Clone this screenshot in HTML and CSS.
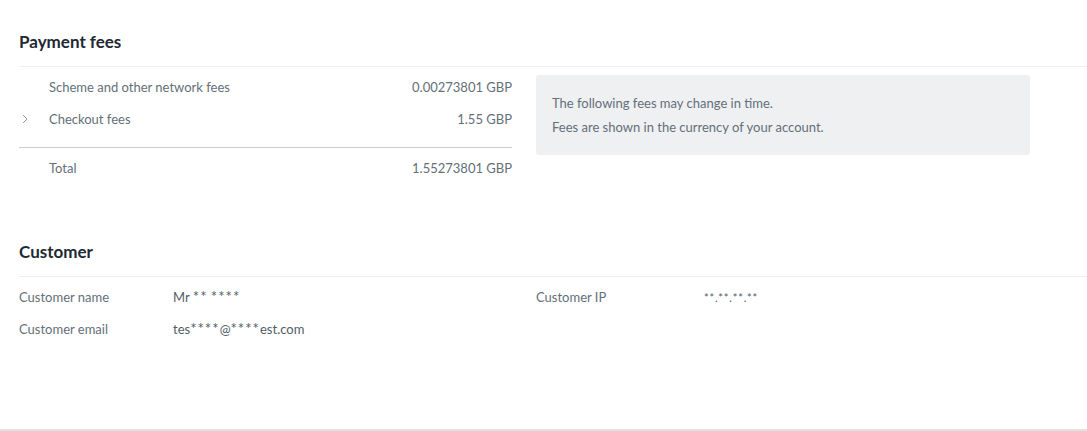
FILE: index.html
```html
<!DOCTYPE html>
<html lang="en">
<head>
<meta charset="utf-8">
<title>Payment details</title>
<link rel="stylesheet" href="styles.css">
</head>
<body>
<div class="page">
  <section class="section fees">
    <h2 class="section-title">Payment fees</h2>
    <div class="fees-body">
      <div class="fee-table">
        <div class="fee-row">
          <span class="fee-toggle"></span>
          <span class="fee-label">Scheme and other network fees</span>
          <span class="fee-amount">0.00273801 GBP</span>
        </div>
        <div class="fee-row">
          <span class="fee-toggle">
            <svg width="8" height="10" viewBox="0 0 8 10"><polyline points="2,1 6,5 2,9" fill="none" stroke="#9aa3aa" stroke-width="1"/></svg>
          </span>
          <span class="fee-label">Checkout fees</span>
          <span class="fee-amount">1.55 GBP</span>
        </div>
        <div class="fee-row total">
          <span class="fee-toggle"></span>
          <span class="fee-label">Total</span>
          <span class="fee-amount">1.55273801 GBP</span>
        </div>
      </div>
      <div class="fee-note">
        <p>The following fees may change in time.</p>
        <p>Fees are shown in the currency of your account.</p>
      </div>
    </div>
  </section>

  <section class="section customer">
    <h2 class="section-title">Customer</h2>
    <div class="customer-body">
      <div class="info-col left">
        <span class="info-label">Customer name</span><span class="info-value">Mr <span class="mask">**</span> <span class="mask">****</span></span>
        <span class="info-label">Customer email</span><span class="info-value">tes<span class="mask">****</span>@<span class="mask">****</span>est.com</span>
      </div>
      <div class="info-col right">
        <span class="info-label">Customer IP</span><span class="info-value ip">**.**.**.**</span>
      </div>
    </div>
  </section>
</div>
</body>
</html>
```
FILE: styles.css
```css
* { box-sizing: border-box; }
html, body { margin: 0; padding: 0; background: #fff; }
body {
  font-family: Lato, "Open Sans", Arial, sans-serif;
  font-size: 13px;
  color: #646f79;
}
.page {
  height: 431px;
  padding-left: 19px;
  border-bottom: 2px solid #dfe2e3;
}
.section-title {
  margin: 0;
  font-size: 17px;
  line-height: 20px;
  font-weight: 700;
  color: #1d2933;
  padding-bottom: 14px;
  border-bottom: 1px solid #eceef0;
}
.fees { padding-top: 32px; }
.fees-body {
  display: flex;
  gap: 24px;
  align-items: flex-start;
}
.fee-table {
  width: 493px;
  padding-top: 4px;
}
.fee-row {
  display: flex;
  align-items: center;
  height: 32px;
}
.fee-row.total {
  margin-top: 12px;
  border-top: 1px solid #c9ced3;
  height: 40px;
  padding-top: 0;
}
.fee-toggle {
  width: 30px;
  display: flex;
  align-items: center;
  padding-left: 2px;
}
.fee-label { flex: 1; }
.fee-amount { text-align: right; }
.fee-note {
  margin-top: 8px;
  width: 494px;
  background: #eff0f2;
  border-radius: 3px;
  padding: 16px;
  line-height: 24px;
}
.fee-note p { margin: 0; }
.customer { padding-top: 55px; }
.customer-body {
  display: flex;
  gap: 24px;
  padding-top: 4px;
}
.info-col {
  display: grid;
  grid-auto-rows: 32px;
  align-items: center;
}
.info-col.left { width: 493px; grid-template-columns: 154px 1fr; }
.info-col.right { grid-template-columns: 168px 1fr; flex: 1; }
.info-value { color: #525d67; }
.mask { font-size: 15px; letter-spacing: 1px; line-height: 1; }
.info-value.ip { font-size: 11px; letter-spacing: 0.8px; }
```
